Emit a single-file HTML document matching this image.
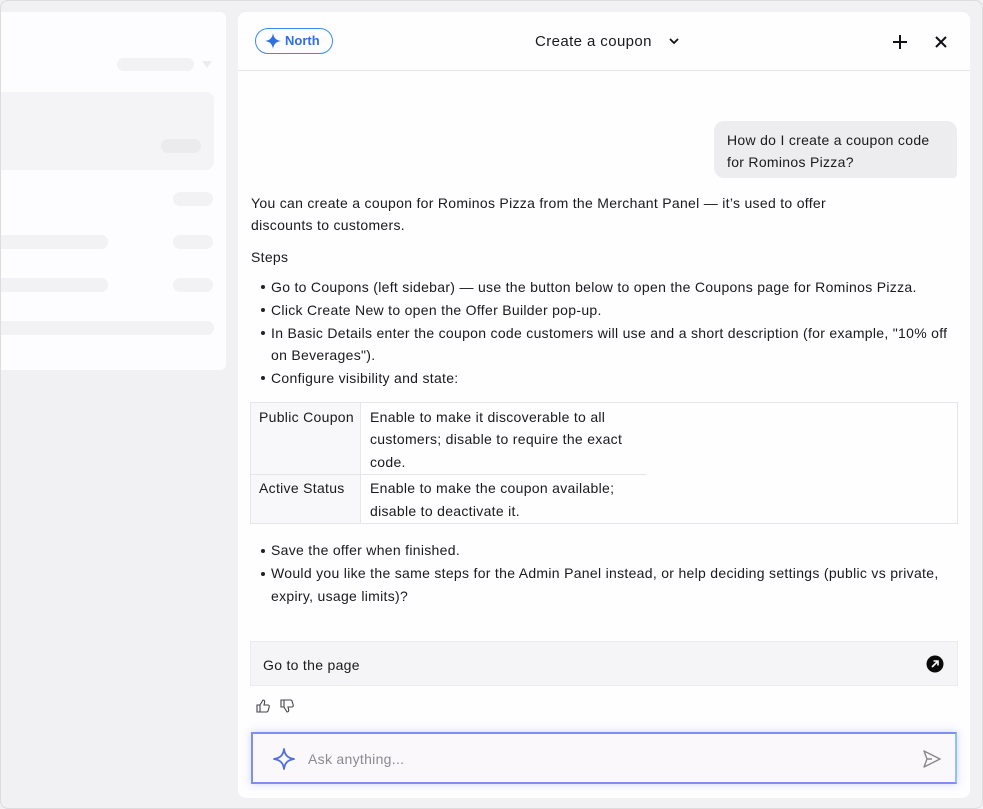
<!DOCTYPE html>
<html><head><meta charset="utf-8"><style>
*{box-sizing:border-box;margin:0;padding:0}
body{width:983px;height:809px;background:#f1f0f3;font-family:"Liberation Sans",sans-serif;color:#1a1a1a;position:relative;overflow:hidden;font-size:14px}
.frame{position:absolute;left:0;top:0;width:983px;height:809px;border:1px solid #dcdbde;border-radius:8px}
.left{position:absolute;left:0;top:12px;width:226px;height:358px;background:#fdfcfe;border-radius:0 6px 6px 0}
.sk{position:absolute;background:#f2f1f4;border-radius:8px}
.panel{position:absolute;left:238px;top:12px;width:732px;height:786px;background:#fefdff;border-radius:8px}
.hdr{position:absolute;left:0;top:0;width:732px;height:59px;border-bottom:1px solid #e6e5e8}
.pill{position:absolute;left:17px;top:16px;width:78px;height:26px;border:1.5px solid #3b8cf0;border-radius:13px;color:#2f6fe0;font-weight:bold;font-size:13px;line-height:23px;padding-left:29px}
.title{position:absolute;left:297px;top:21px;font-size:15px;letter-spacing:0.4px}
.t{position:absolute;white-space:nowrap;line-height:22px;letter-spacing:0.3px;top:1px}
.bul{position:absolute;left:23px;width:4px;height:4px;border-radius:2px;background:#222}
</style></head><body>
<div class="left">
<div class="sk" style="left:117px;top:46px;width:77px;height:13px;border-radius:7px"></div>
<div style="position:absolute;left:202px;top:49px;border-left:5px solid transparent;border-right:5px solid transparent;border-top:7px solid #ececef"></div>
<div class="sk" style="left:0;top:80px;width:214px;height:78px;border-radius:0 8px 8px 0;background:#f4f3f6"></div>
<div class="sk" style="left:161px;top:127px;width:40px;height:14px;background:#ebeaed"></div>
<div class="sk" style="left:173px;top:180px;width:40px;height:14px"></div>
<div class="sk" style="left:0;top:223px;width:108px;height:14px;border-radius:0 7px 7px 0"></div>
<div class="sk" style="left:173px;top:223px;width:40px;height:14px"></div>
<div class="sk" style="left:0;top:266px;width:108px;height:14px;border-radius:0 7px 7px 0"></div>
<div class="sk" style="left:173px;top:266px;width:40px;height:14px"></div>
<div class="sk" style="left:0;top:309px;width:214px;height:14px;border-radius:0 7px 7px 0"></div>
</div>
<div class="panel">
<div class="hdr">
<div class="pill"><svg style="position:absolute;left:9px;top:4px" width="16" height="16" viewBox="0 0 16 16"><path d="M8 0 C8.7 5 11 7.3 16 8 C11 8.7 8.7 11 8 16 C7.3 11 5 8.7 0 8 C5 7.3 7.3 5 8 0Z" fill="#2f6fe0"/></svg>North</div>
<div class="title">Create a coupon</div>
<svg style="position:absolute;left:430px;top:24px" width="12" height="10" viewBox="0 0 12 10"><path d="M2 3 L6 7 L10 3" stroke="#111" stroke-width="1.8" fill="none"/></svg>
<svg style="position:absolute;left:654px;top:22px" width="16" height="16" viewBox="0 0 16 16"><path d="M8 1V15M1 8H15" stroke="#111" stroke-width="2"/></svg>
<svg style="position:absolute;left:696px;top:23px" width="14" height="14" viewBox="0 0 14 14"><path d="M2 2L12 12M12 2L2 12" stroke="#111" stroke-width="2"/></svg>
</div>
<div style="position:absolute;left:476px;top:109px;width:243px;height:57px;background:#ededf0;border-radius:10px 10px 4px 10px"></div>
<div style="position:absolute;left:0;top:0">
<div class="t" style="left:489px;top:117px">How do I create a coupon code</div>
<div class="t" style="left:489px;top:139px">for Rominos Pizza?</div>
<div class="t" style="left:13px;top:180px">You can create a coupon for Rominos Pizza from the Merchant Panel — it’s used to offer</div>
<div class="t" style="left:13px;top:202px">discounts to customers.</div>
<div class="t" style="left:13px;top:234px">Steps</div>
<div class="bul" style="top:273px"></div><div class="t" style="left:33px;top:264px">Go to Coupons (left sidebar) — use the button below to open the Coupons page for Rominos Pizza.</div>
<div class="bul" style="top:296px"></div><div class="t" style="left:33px;top:287px">Click Create New to open the Offer Builder pop-up.</div>
<div class="bul" style="top:319px"></div><div class="t" style="left:33px;top:310px">In Basic Details enter the coupon code customers will use and a short description (for example, "10% off</div>
<div class="t" style="left:33px;top:332px">on Beverages").</div>
<div class="bul" style="top:364px"></div><div class="t" style="left:33px;top:355px">Configure visibility and state:</div>
<div style="position:absolute;left:12px;top:390px;width:708px;height:122px;border:1px solid #e6e5e8"></div>
<div style="position:absolute;left:13px;top:391px;width:110px;height:120px;background:#f8f7fa;border-right:1px solid #e6e5e8"></div>
<div style="position:absolute;left:13px;top:462px;width:395px;height:1px;background:#e6e5e8"></div>
<div class="t" style="left:21px;top:394px">Public Coupon</div>
<div class="t" style="left:132px;top:394px">Enable to make it discoverable to all</div>
<div class="t" style="left:132px;top:416px">customers; disable to require the exact</div>
<div class="t" style="left:132px;top:439px">code.</div>
<div class="t" style="left:21px;top:465px">Active Status</div>
<div class="t" style="left:132px;top:465px">Enable to make the coupon available;</div>
<div class="t" style="left:132px;top:488px">disable to deactivate it.</div>
<div class="bul" style="top:537px"></div><div class="t" style="left:33px;top:527px">Save the offer when finished.</div>
<div class="bul" style="top:560px"></div><div class="t" style="left:33px;top:550px">Would you like the same steps for the Admin Panel instead, or help deciding settings (public vs private,</div>
<div class="t" style="left:33px;top:573px">expiry, usage limits)?</div>
</div>
<div style="position:absolute;left:12px;top:629px;width:708px;height:45px;background:#f5f4f7;border:1px solid #ebeaed"></div>
<div class="t" style="left:25px;top:642px">Go to the page</div>
<svg style="position:absolute;left:688px;top:643px" width="18" height="18" viewBox="0 0 18 18"><circle cx="9" cy="9" r="8.5" fill="#0b0b0b"/><path d="M6 12L12 6M7.5 6H12V10.5" stroke="#fff" stroke-width="1.6" fill="none"/></svg>
<svg style="position:absolute;left:17px;top:686px" width="16" height="16" viewBox="0 0 16 16"><path d="M2 7H5V14H2ZM5 7L8 2C9.5 2 10 3 9.5 5L9 7H13C14 7 14.5 8 14.2 9L13 13C12.8 13.7 12.3 14 11.5 14H5" stroke="#444" stroke-width="1.1" fill="none"/></svg>
<svg style="position:absolute;left:41px;top:686px" width="16" height="16" viewBox="0 0 16 16"><path d="M2 2H5V9H2ZM5 9L8 14C9.5 14 10 13 9.5 11L9 9H13C14 9 14.5 8 14.2 7L13 3C12.8 2.3 12.3 2 11.5 2H5" stroke="#444" stroke-width="1.1" fill="none"/></svg>
<div style="position:absolute;left:13px;top:720px;width:706px;height:52px;border:2px solid #7f8ef2;border-right-color:#8cc2f5;background:#faf8fb;box-shadow:0 0 8px rgba(120,140,240,.35)"></div>
<svg style="position:absolute;left:35px;top:736px" width="22" height="22" viewBox="0 0 22 22"><path d="M11 1C11.8 7 14.5 10 21 11C14.5 12 11.8 15 11 21C10.2 15 7.5 12 1 11C7.5 10 10.2 7 11 1Z" stroke="#4f6fe0" stroke-width="1.8" fill="none" stroke-linejoin="round"/></svg>
<div class="t" style="left:70px;top:736px;color:#8a8a8f">Ask anything...</div>
<svg style="position:absolute;left:684px;top:737px" width="20" height="20" viewBox="0 0 20 20"><path d="M2 2L18 10L2 18L5 10Z M5 10H10" stroke="#888" stroke-width="1.4" fill="none" stroke-linejoin="round"/></svg>
</div>
<div class="frame"></div>
</body></html>
